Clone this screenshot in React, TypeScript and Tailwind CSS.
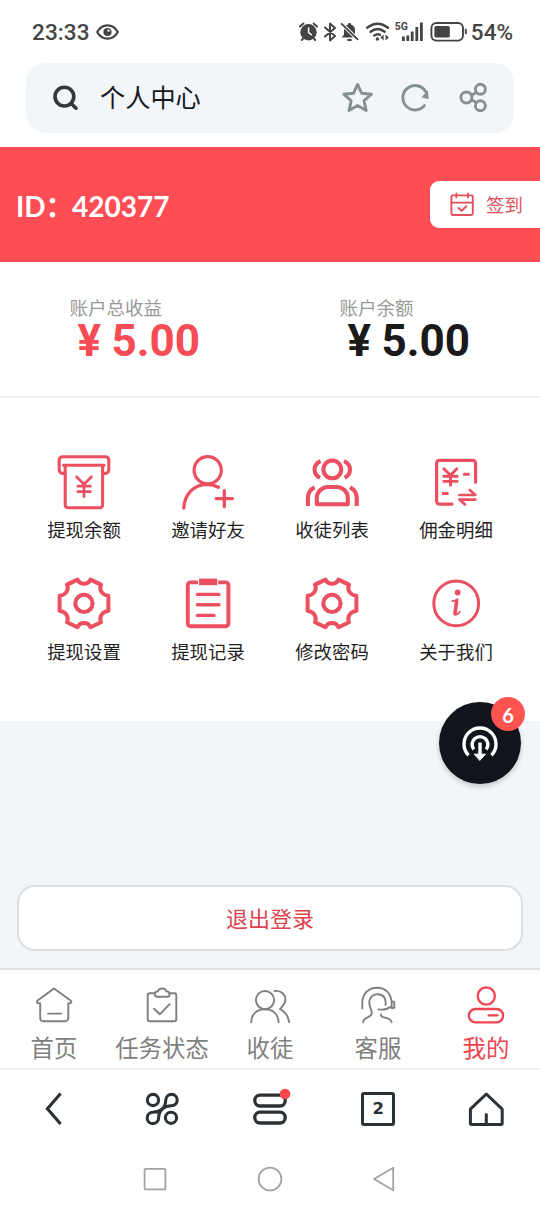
import type { ReactNode } from 'react';

interface IconProps {
  size?: number;
  width?: number;
  stroke?: number;
  className?: string;
  children: ReactNode;
}

function Icon({ size = 40, width, stroke = 1.9, className = '', children }: IconProps) {
  const w = width ?? size;
  return (
    <svg
      width={w}
      height={size}
      viewBox={`0 0 ${w} ${size}`}
      fill="none"
      stroke="currentColor"
      strokeWidth={stroke}
      strokeLinecap="round"
      strokeLinejoin="round"
      className={`shrink-0 overflow-visible ${className}`}
    >
      {children}
    </svg>
  );
}

const GearIcon = () => (
  <Icon size={56} stroke={4}>
    <path d="M21.5 3.6Q23.5 7.8 28 7.8Q32.5 7.8 34.5 3.6L45 8.6C43 13 45 18.5 52.4 19.8V34.8C45 36.2 43 41.6 45 46.2L34.5 51.2Q32.5 47 28 47Q23.5 47 21.5 51.2L11 46.2C13 41.6 11 36.2 3.6 34.8V19.8C11 18.5 13 13 11 8.6Z" />
    <circle cx="28" cy="27.4" r="8.6" />
  </Icon>
);

const MENU = [
  {
    label: '提现余额',
    icon: (
      <Icon size={56} stroke={3.1}>
        <path d="M9 19.4H6.5a3.3 3.3 0 0 1-3.3-3.3V6a3.3 3.3 0 0 1 3.3-3.3h43A3.3 3.3 0 0 1 52.8 6v10.1a3.3 3.3 0 0 1-3.3 3.3H47" />
        <path d="M7.5 11.2H48M9.2 11.2V51a2.7 2.7 0 0 0 2.7 2.7h32a2.7 2.7 0 0 0 2.7-2.7V11.2" />
        <path strokeWidth="2.7" d="M20.6 22.8L28 30.4L35.4 22.8M28 30.4V42.7M21.8 32.2H34.4M21.8 37.7H34.4" />
      </Icon>
    ),
  },
  {
    label: '邀请好友',
    icon: (
      <Icon size={56} stroke={3.3}>
        <circle cx="27.7" cy="16.2" r="13.6" />
        <path d="M3.8 54C4.5 41 13 30.6 26.7 30.3Q33 30.4 38.5 33.3M36.2 44.7H52.4M44.3 36.6V52.8" />
      </Icon>
    ),
  },
  {
    label: '收徒列表',
    icon: (
      <Icon size={56} stroke={4.1}>
        <circle cx="28.3" cy="15.4" r="8.9" />
        <path strokeLinecap="butt" d="M16.6 7.2Q10.6 9.7 10.6 15.4Q10.6 21 16 23.8M40 7.2Q46 9.7 46 15.4Q46 21 40.6 23.8" />
        <path d="M12.8 50.2V44a11 11 0 0 1 11-11h9a11 11 0 0 1 11 11v6.2z" />
        <path strokeLinecap="butt" d="M10.6 33.4Q3.9 36.5 3.9 44V52M46 33.4Q52.7 36.5 52.7 44V52" />
      </Icon>
    ),
  },
  {
    label: '佣金明细',
    icon: (
      <Icon size={56} stroke={3.2}>
        <path d="M47.6 28.2V9.3A2.9 2.9 0 0 0 44.7 6.4H11.5A2.9 2.9 0 0 0 8.6 9.3V47.2A2.9 2.9 0 0 0 11.5 50.1H24" />
        <path strokeWidth="2.9" strokeLinecap="butt" d="M15 14L22.5 21.2L29.6 14M22.5 21V32.4M14.6 22.3H30.4M14.6 27.4H30.4M35.2 20.2H41.6M14 39.5H20.6" />
        <path strokeWidth="2.7" d="M31.4 41H47.4L41.8 36M47.4 45.6H31.4L37 50.6" />
      </Icon>
    ),
  },
  { label: '提现设置', icon: <GearIcon /> },
  {
    label: '提现记录',
    icon: (
      <Icon size={56} stroke={3.9}>
        <rect x="7.8" y="6.4" width="40.6" height="43.8" rx="2.6" />
        <rect x="18" y="1.8" width="20.2" height="8.6" fill="#fff" stroke="none" />
        <rect x="19" y="2.6" width="18.2" height="6.6" fill="currentColor" stroke="none" />
        <path strokeWidth="3.4" d="M17.4 18.4H39M17.4 28.8H39M17.4 39.4H34" />
      </Icon>
    ),
  },
  { label: '修改密码', icon: <GearIcon /> },
  {
    label: '关于我们',
    icon: (
      <Icon size={56} stroke={3}>
        <circle cx="28.2" cy="27.4" r="22.4" />
        <circle cx="29.7" cy="16.5" r="2.9" fill="currentColor" stroke="none" />
        <path strokeWidth="1.8" d="M24.4 25.2Q27 24.6 29.6 23.2M27 38.6Q29.6 39 31.8 35.8" />
        <path strokeWidth="3.6" d="M28.7 25.2L26.9 37.6" />
      </Icon>
    ),
  },
];

const TABS = [
  {
    label: '首页',
    icon: (
      <Icon>
        <path d="M6.2 18.3H4.2Q1.8 17.6 3.6 15.6L20 3.4L36.6 15.6Q38.4 17.6 36 18.3H34.3V33.2A3 3 0 0 1 31.3 36.2H9.2A3 3 0 0 1 6.2 33.2ZM14 28.6H27" />
      </Icon>
    ),
  },
  {
    label: '任务状态',
    icon: (
      <Icon>
        <path d="M13 8.2H7.7A2 2 0 0 0 5.7 10.2V34.3A2 2 0 0 0 7.7 36.3H32.3A2 2 0 0 0 34.3 34.3V10.2A2 2 0 0 0 32.3 8.2H27.4" />
        <path d="M15.8 6.4C17 2.6 23.4 2.6 24.6 6.4Q27.6 6.6 27.6 9.2T25 11.8H15.4Q12.8 11.8 12.8 9.2T15.8 6.4ZM12 23.7L18 29.2L27.6 19.2" />
      </Icon>
    ),
  },
  {
    label: '收徒',
    icon: (
      <Icon>
        <circle cx="15" cy="15.1" r="9.1" />
        <path d="M1.2 37.2C1.6 29 7 24.3 15 24.2S28 29 28.6 37.2M24.6 6C31.5 5 35.8 10 35.4 15.4C35 19.6 31.8 21.8 30 24.2C35.4 27 38.2 31 39.2 37.2" />
      </Icon>
    ),
  },
  {
    label: '客服',
    icon: (
      <Icon>
        <path d="M4.3 23.5V17.5C4.6 8.5 10.5 2.7 19.3 2.7C27 2.7 32.6 8 33.6 16.2L36.3 17V22.8L33.6 23.2V16.2" />
        <path d="M27.6 19.8V16.6C27.2 12 24 9.2 19.4 9.2C14.2 9.2 11.3 12.8 11.3 17.6C11.3 22.5 13.8 24 13.8 28.2C13.8 32.5 5.6 31.6 5.2 37.2M20.4 24.4Q28 25.4 32.2 22M23 29.4Q22.8 31.8 26 32.4Q33 33.6 33.6 37.2" />
      </Icon>
    ),
  },
  {
    label: '我的',
    active: true,
    icon: (
      <Icon stroke={2.3}>
        <circle cx="20.3" cy="11" r="8.6" />
        <rect x="2.9" y="24" width="34.2" height="13.3" rx="6.6" />
        <path d="M22.6 30.3H31.6" />
      </Icon>
    ),
  },
];

function StatusBar() {
  return (
    <div className="flex h-[63px] items-center justify-between pr-[28px] pl-[32px] text-[#444] font-['Roboto',sans-serif]">
      <div className="flex items-center gap-[6px]">
        <span className="mt-[1px] text-[22.5px] leading-none font-medium tracking-[0.1px]">23:33</span>
        <Icon size={16} width={23} stroke={2.2}>
          <path d="M1.2 8C6 -0.8 17 -0.8 21.8 8C17 16.8 6 16.8 1.2 8Z" />
          <circle cx="11.5" cy="8" r="4.1" fill="currentColor" stroke="none" />
          <circle cx="12.6" cy="6.6" r="1.2" fill="#fff" stroke="none" />
        </Icon>
      </div>
      <div className="flex items-center">
        {/* alarm */}
        <Icon size={20} width={19} stroke={2}>
          <circle cx="9.5" cy="10.2" r="8.2" fill="currentColor" stroke="none" />
          <path d="M1 4.6L4.4 1.6M18 4.6L14.6 1.6M4 16.6L2.8 18M15 16.6L16.2 18" />
          <path stroke="#fff" strokeWidth="1.5" d="M9.6 6V10.6L12.4 12.6" />
        </Icon>
        {/* bluetooth */}
        <Icon size={20} width={12} stroke={2} className="ml-[6px]">
          <path d="M1 5.4L11 14L6 18.4V1.6L11 6L1 14.6" />
        </Icon>
        {/* muted bell */}
        <Icon size={20} width={19} stroke={1.8} className="ml-[4px]">
          <path d="M9.5 1C10.6 1 11 1.6 11 2.4C14 3.4 15 5.6 15 8.4V12.4L17.2 15.4H1.8L4 12.4V8.4C4 5.6 5 3.4 8 2.4C8 1.6 8.4 1 9.5 1Z" fill="currentColor" stroke="none" />
          <path d="M8 18H11" />
          <path stroke="#fff" strokeWidth="3.6" strokeLinecap="butt" d="M1.6 1.8L17.6 17.4" />
          <path d="M1.6 1.8L17.6 17.4" />
        </Icon>
        {/* wifi */}
        <Icon size={20} width={24} stroke={2.4} className="ml-[7px]">
          <path d="M1.2 5.8Q11.6 -2.4 22 5.8M4.6 9.8Q11.6 4.2 18.6 9.8M8.2 13.6Q11.4 11.2 14 12.8" />
          <circle cx="11.4" cy="17" r="1.8" fill="currentColor" stroke="none" />
          <path d="M17.6 12.6V18.6L14.4 15.6ZM19.6 12.6V18.6L22.8 15.6Z" fill="currentColor" stroke="none" />
        </Icon>
        {/* signal */}
        <div className="relative ml-[5px] h-[20px] w-[28px]">
          <span className="absolute top-0 left-0 text-[10.5px] leading-[10px] font-bold">5G</span>
          <Icon size={20} width={28} stroke={2.8}>
            <path strokeLinecap="butt" d="M8.4 14.4V19M12.8 13.4V19M17.2 9.4V19M21.8 5V19M26.4 .6V19" />
          </Icon>
        </div>
        {/* battery */}
        <Icon size={20} width={37} stroke={1.9} className="ml-[7px]">
          <rect x="1.4" y="1" width="31.6" height="17.6" rx="5" />
          <rect x="4.4" y="4" width="15.4" height="11.6" rx="1.6" fill="currentColor" stroke="none" />
          <path d="M35.8 7.6V11.4" />
        </Icon>
        <span className="-mr-[1px] mt-[1px] ml-[4px] text-[22.5px] leading-none font-medium">54%</span>
      </div>
    </div>
  );
}

function SearchBar() {
  return (
    <div className="mx-[26px] flex h-[70px] items-center rounded-[20px] bg-[#f3f6f9] pr-[25px] pl-[26px]">
      <Icon size={28} stroke={3.6} className="text-[#33383c]">
        <circle cx="12.4" cy="12.6" r="9.4" />
        <path d="M19.4 19.8L24 24.2" />
      </Icon>
      <span className="-mt-[2px] ml-[20px] flex-1 text-[25.2px] leading-none text-[#15191d]">个人中心</span>
      <div className="flex items-center gap-[26px] text-[#849094]">
        <Icon size={32} stroke={2.9}>
          <path d="M16.6 2.4L20.6 11.2L30.4 12.2L23 18.8L25.2 28.6L16.6 23.6L8 28.6L10.2 18.8L2.8 12.2L12.6 11.2Z" />
        </Icon>
        <Icon size={32} stroke={2.9}>
          <path d="M25.4 23.6A12.2 12.2 0 1 1 26.6 9.6" />
          <path d="M28.4 9.6L29.2 16.4L23.6 15.2Z" fill="currentColor" strokeWidth="1" />
        </Icon>
        <Icon size={32} stroke={2.9}>
          <circle cx="9.4" cy="15.5" r="5.5" />
          <circle cx="23.4" cy="7.3" r="5" />
          <circle cx="23.4" cy="23.7" r="5" />
          <path d="M14.2 12.9Q17.4 12.5 19.2 10.1M14.2 18.1Q17.4 18.5 19.2 20.9" />
        </Icon>
      </div>
    </div>
  );
}

function Amount({ label, value, valueClass }: { label: string; value: string; valueClass: string }) {
  return (
    <div className="flex-1 pl-[69.5px]">
      <p className="text-[18.5px] leading-[20px] text-[#999]">{label}</p>
      <p className={`mt-[2px] flex text-[44px] leading-[44px] font-bold whitespace-nowrap font-['Roboto',sans-serif] ${valueClass}`}>
        <span className="w-[42px] pl-[8px] text-left">¥</span>
        <span>{value}</span>
      </p>
    </div>
  );
}

function BrowserBar() {
  return (
    <div className="grid h-[78px] grid-cols-5 place-items-center text-[#2b3135]">
      <Icon stroke={3.1}>
        <path strokeLinejoin="miter" strokeLinecap="butt" d="M26.6 4.6L13.4 19.8L26.6 35" />
      </Icon>
      <Icon stroke={3.1}>
        <circle cx="11" cy="11" r="5.6" />
        <circle cx="29" cy="28.8" r="5.6" />
        <path d="M20.2 20C23 17.6 23.6 15 23.8 11A5.7 5.7 0 1 1 29.5 16.8C26 17 23 17.6 20.2 20C17.6 22.4 16.8 25 16.6 29A5.7 5.7 0 1 1 10.9 23.2C14.8 23 17.6 22.4 20.2 20Z" />
      </Icon>
      <Icon stroke={3.3}>
        <rect x="4.8" y="6.2" width="30.4" height="10.8" rx="5.2" />
        <rect x="4.8" y="23.2" width="30.4" height="10.8" rx="5.2" />
        <circle cx="35" cy="5" r="5.3" fill="#fb464c" stroke="none" />
      </Icon>
      <div className="flex h-[34px] w-[34px] items-center justify-center rounded-[3px] border-3 border-[#2b3135] text-[15px] leading-none font-bold font-['DejaVu_Sans',sans-serif]">
        <span className="scale-x-110">2</span>
      </div>
      <Icon stroke={3}>
        <path d="M4.4 20.2L20.3 5L36.2 20.2V34.2Q36.2 35.4 35 35.4H5.6Q4.4 35.4 4.4 34.2ZM20.3 25.6V35" />
      </Icon>
    </div>
  );
}

export default function App() {
  return (
    <div className="flex h-[1208px] w-[540px] flex-col overflow-hidden bg-white font-['Noto_Sans_CJK_SC',sans-serif]">
      <StatusBar />
      <SearchBar />

      <header className="mt-[14px] flex h-[115px] items-center justify-between bg-[#ff4d55] pl-[16px]">
        <h1 className="mt-[2px] flex text-[28px] leading-none font-bold whitespace-nowrap text-white font-['Lato','Noto_Sans_CJK_SC',sans-serif]">
          <span className="w-[56px]">ID：</span>
          <span>420377</span>
        </h1>
        <button className="flex h-[47px] w-[110px] items-center rounded-l-[9px] bg-white pl-[20px] text-[#e2505b]">
          <Icon size={24} stroke={1.9}>
            <rect x="1.4" y="2.4" width="21.4" height="19.6" rx="1.4" />
            <path d="M1.4 9.6H22.8M6.4 .4V4.4M18 .4V4.4M8.6 15L11.6 17.8L16.4 13.2" />
          </Icon>
          <span className="-mt-[1px] ml-[12px] text-[18.4px] leading-none whitespace-nowrap">签到</span>
        </button>
      </header>

      <section className="flex h-[136px] border-b-2 border-[#efefef] pt-[35px]">
        <Amount label="账户总收益" value="5.00" valueClass="text-[#f64c56]" />
        <Amount label="账户余额" value="5.00" valueClass="text-[#1a1a1a]" />
      </section>

      <section className="grid h-[323px] grid-cols-4 content-start pt-[56px] pr-[22px] pl-[22px]">
        {MENU.map(({ label, icon }) => (
          <div key={label} className="flex h-[121.5px] flex-col items-center text-[#ea5060]">
            {icon}
            <span className="mt-[7px] text-[18.4px] leading-[24px] text-[#1f1f1f]">{label}</span>
          </div>
        ))}
      </section>

      <section className="relative flex h-[247px] flex-col justify-end bg-[#f3f6f9] px-[17px] pb-[17px]">
        <button className="h-[66px] rounded-[18px] border-2 border-[#dedee3] bg-white pb-[2px] text-[22px] leading-none text-[#dc4550]">
          退出登录
        </button>

        {/* Floating download bubble */}
        <div className="absolute -top-[19px] left-[439px] flex h-[82px] w-[82px] items-center justify-center rounded-full bg-[#11151b] text-white shadow-[0_3px_5px_rgba(0,0,0,0.18)]">
          <Icon stroke={3.4} className="mt-[1px]">
            <path strokeLinecap="butt" d="M8.6 31.2A16 16 0 1 1 31.4 31.2M13.8 25.4A7.9 7.9 0 1 1 26.2 25.4" />
            <path strokeLinecap="butt" d="M20 18.6V31" />
            <path d="M14.6 30.2H25.4L20 36.2Z" fill="currentColor" strokeWidth="1" />
          </Icon>
          <span className="absolute -top-[5px] left-[52px] flex h-[34px] w-[34px] items-center justify-center rounded-full bg-[#ff5350] pt-[1px] text-[20px] leading-none font-bold font-['Lato',sans-serif]">
            6
          </span>
        </div>
      </section>

      <nav className="grid h-[102px] grid-cols-5 border-t-2 border-b-2 border-t-[#e2e2e8] border-b-[#f0f0f2] pt-[15px]">
        {TABS.map(({ label, icon, active }) => (
          <div key={label} className={`flex flex-col items-center ${active ? 'text-[#f0454f]' : 'text-[#7f7f7f]'}`}>
            {icon}
            <span className="mt-[6.5px] text-[23.4px] leading-[30px] whitespace-nowrap">{label}</span>
          </div>
        ))}
      </nav>

      <BrowserBar />

      {/* Android navigation keys */}
      <div className="flex h-[60px] items-center justify-center gap-[91px] pt-[1px] text-[#a3a3a3]">
        <Icon size={24} stroke={1.8}>
          <rect x="1.6" y="1.8" width="20.8" height="20.6" rx="1" />
        </Icon>
        <Icon size={24} stroke={1.8}>
          <circle cx="12" cy="12" r="11.4" />
        </Icon>
        <Icon size={24} stroke={1.8}>
          <path d="M1 12L20.2 .8V23.2Z" />
        </Icon>
      </div>
    </div>
  );
}
